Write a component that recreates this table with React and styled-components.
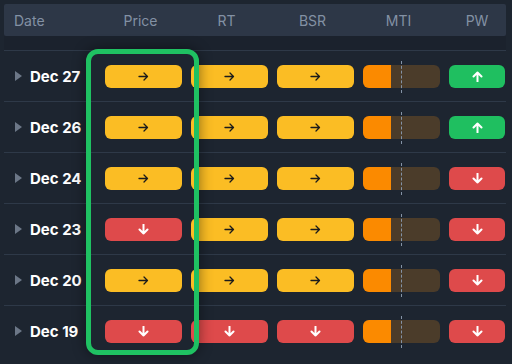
import React from "react";
import styled, { createGlobalStyle } from "styled-components";

const GlobalStyle = createGlobalStyle`
  html, body {
    margin: 0;
    padding: 0;
    background: #1d2530;
    font-family: Inter, "Noto Sans", "Liberation Sans", sans-serif;
  }
`;

const COLORS = {
  flat: "#fbbd24",
  down: "#de4a4b",
  up: "#1fbf60",
};

const rows = [
  { date: "Dec 27", price: "flat", rt: "flat", bsr: "flat", mti: 36, pw: "up" },
  { date: "Dec 26", price: "flat", rt: "flat", bsr: "flat", mti: 36, pw: "up" },
  { date: "Dec 24", price: "flat", rt: "flat", bsr: "flat", mti: 36, pw: "down" },
  { date: "Dec 23", price: "down", rt: "flat", bsr: "flat", mti: 36, pw: "down" },
  { date: "Dec 20", price: "flat", rt: "flat", bsr: "flat", mti: 36, pw: "down" },
  { date: "Dec 19", price: "down", rt: "down", bsr: "down", mti: 36, pw: "down" },
];

function Arrow({ dir }) {
  if (dir === "flat") {
    return (
      <svg width="11" height="9" viewBox="0 0 11 9" fill="none">
        <path d="M1 4.5h8.5M6 1l3.5 3.5L6 8" stroke="#1b1b1b" strokeWidth="1.3" strokeLinecap="round" strokeLinejoin="round" />
      </svg>
    );
  }
  const d = dir === "up" ? "M5.5 10.5V1.5M1.5 5.5l4-4 4 4" : "M5.5 0.5v9M1.5 5.5l4 4 4-4";
  return (
    <svg width="11" height="11" viewBox="0 0 11 11" fill="none">
      <path d={d} stroke="#ffffff" strokeWidth="2" strokeLinecap="round" strokeLinejoin="round" />
    </svg>
  );
}

export default function App() {
  return (
    <>
      <GlobalStyle />
      <Page>
        <Table>
          <HeaderRow>
            <HeadCell $align="left">Date</HeadCell>
            <HeadCell>Price</HeadCell>
            <HeadCell>RT</HeadCell>
            <HeadCell>BSR</HeadCell>
            <HeadCell>MTI</HeadCell>
            <HeadCell $last>PW</HeadCell>
          </HeaderRow>
          <Spacer />
          {rows.map((r) => (
            <Row key={r.date}>
              <DateCell>
                <Caret />
                {r.date}
              </DateCell>
              <Pill $tone={r.price}><Arrow dir={r.price} /></Pill>
              <Pill $tone={r.rt}><Arrow dir={r.rt} /></Pill>
              <Pill $tone={r.bsr}><Arrow dir={r.bsr} /></Pill>
              <MtiCell>
                <MtiBar>
                  <MtiFill style={{ width: `${r.mti}%` }} />
                </MtiBar>
                <MidLine />
              </MtiCell>
              <Pill $tone={r.pw}><Arrow dir={r.pw} /></Pill>
            </Row>
          ))}
          <Highlight />
        </Table>
      </Page>
    </>
  );
}

const Page = styled.div`
  width: 512px;
  height: 364px;
  padding: 4px 6px 0 4px;
  box-sizing: border-box;
  overflow: hidden;
`;

const Table = styled.div`
  position: relative;
  width: 502px;
`;

const grid = `
  display: grid;
  grid-template-columns: 92px 77px 77px 77px 77px 56px;
  column-gap: 9px;
  align-items: center;
`;

const HeaderRow = styled.div`
  ${grid}
  height: 32px;
  background: #2d3747;
  border-radius: 2px;
`;

const HeadCell = styled.div`
  color: #8391a4;
  font-size: 14px;
  font-weight: 400;
  text-align: ${(p) => (p.$align === "left" ? "left" : "center")};
  padding-left: ${(p) => (p.$align === "left" ? "10px" : "0")};
  padding-right: ${(p) => (p.$align === "left" || p.$last ? "0" : "6px")};
`;

const Spacer = styled.div`
  height: 14px;
  background: #1b222d;
`;

const Row = styled.div`
  ${grid}
  height: 50px;
  border-top: 1px solid #2e3948;
`;

const DateCell = styled.div`
  display: flex;
  align-items: center;
  gap: 8px;
  padding-left: 11px;
  color: #ffffff;
  font-size: 15px;
  font-weight: 700;
`;

const Caret = styled.span`
  width: 0;
  height: 0;
  border-top: 5px solid transparent;
  border-bottom: 5px solid transparent;
  border-left: 7px solid #6c7787;
`;

const Pill = styled.div`
  height: 23px;
  border-radius: 6px;
  background: ${(p) => COLORS[p.$tone]};
  display: flex;
  align-items: center;
  justify-content: center;
`;

const MtiCell = styled.div`
  position: relative;
  height: 23px;
`;

const MtiBar = styled.div`
  height: 100%;
  border-radius: 6px;
  background: #4b3c2a;
  overflow: hidden;
`;

const MtiFill = styled.div`
  height: 100%;
  background: #fb8a00;
`;

const MidLine = styled.div`
  position: absolute;
  left: 38px;
  top: -4px;
  bottom: -5px;
  border-left: 1px dashed #8493a6;
`;

const Highlight = styled.div`
  position: absolute;
  left: 82px;
  top: 45px;
  width: 113px;
  height: 306px;
  box-sizing: border-box;
  border: 5px solid #1fc162;
  border-radius: 12px;
  box-shadow: 0 0 14px rgba(0, 0, 0, 0.45);
  pointer-events: none;
`;
